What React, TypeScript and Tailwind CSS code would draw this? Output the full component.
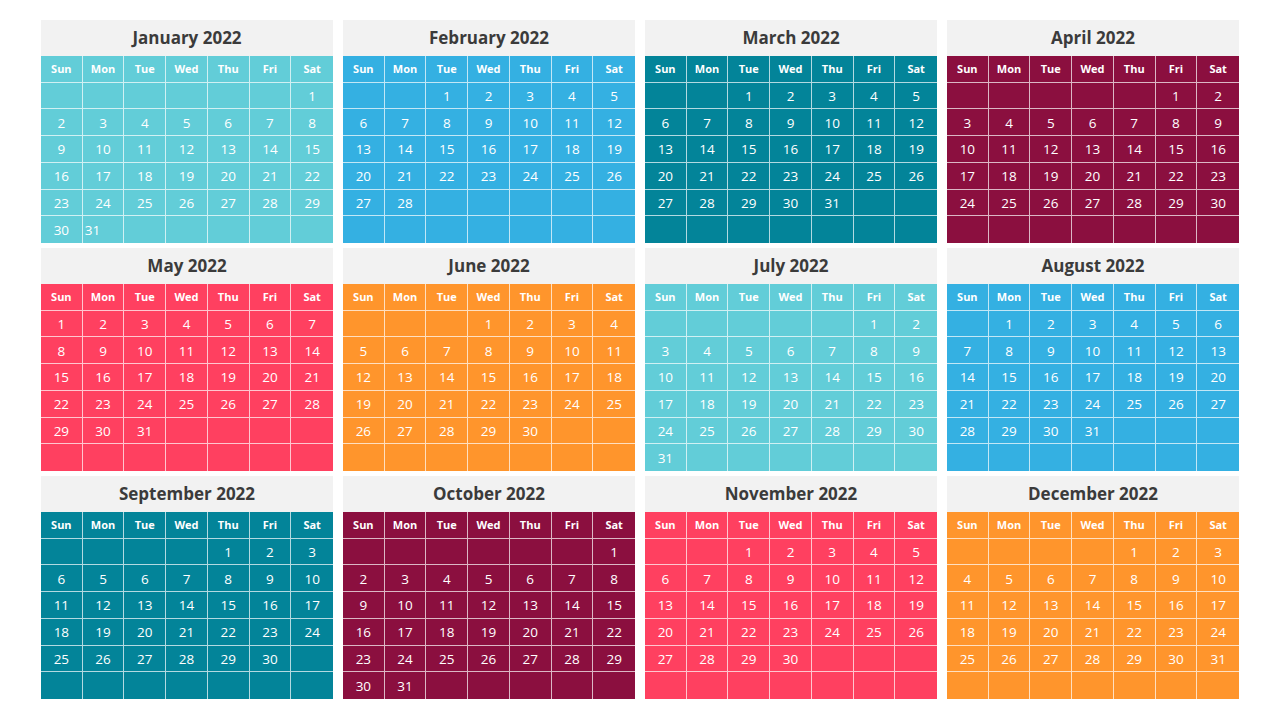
import React from "react";

const MONTHS = [
  "January", "February", "March", "April", "May", "June",
  "July", "August", "September", "October", "November", "December",
];
const COLORS = [
  "bg-[#62cdd8]", "bg-[#34b0e2]", "bg-[#038499]", "bg-[#8b0f3f]",
  "bg-[#ff4060]", "bg-[#ff952c]", "bg-[#62cdd8]", "bg-[#34b0e2]",
  "bg-[#038499]", "bg-[#8b0f3f]", "bg-[#ff4060]", "bg-[#ff952c]",
];
const DAYS = ["Sun", "Mon", "Tue", "Wed", "Thu", "Fri", "Sat"];

function Month({ m }: { m: number }) {
  const first = new Date(2022, m, 1).getDay();
  const count = new Date(2022, m + 1, 0).getDate();
  const cells: (number | null)[] = [];
  for (let i = 0; i < 42; i++) {
    const d = i - first + 1;
    cells.push(d >= 1 && d <= count ? d : null);
  }
  return (
    <div className="flex flex-col">
      <div className="h-[36px] bg-[#f2f2f2] flex items-center justify-center text-[17px] font-bold text-[#3b3b3b]">
        {MONTHS[m]} 2022
      </div>
      <div className={`grid grid-cols-7 grid-rows-[repeat(7,1fr)] h-[187px] ${COLORS[m]} text-white`}>
        {DAYS.map((d, i) => (
          <div
            key={d}
            className={`flex items-center justify-center text-[11px] font-bold border-b border-white/70 ${i < 6 ? "border-r" : ""}`}
          >
            {d}
          </div>
        ))}
        {cells.map((d, i) => {
          const col = i % 7;
          const row = Math.floor(i / 7);
          const odd = m === 0 && d === 31;
          const label = m === 8 && d === 4 ? 6 : d;
          return (
            <div
              key={i}
              className={`flex items-center pt-px ${odd ? "justify-start pl-[2px]" : "justify-center"} text-[13.5px] border-white/70 ${col < 6 ? "border-r" : ""} ${row < 5 ? "border-b" : ""}`}
            >
              {label ?? ""}
            </div>
          );
        })}
      </div>
    </div>
  );
}

export default function App() {
  return (
    <div
      className="w-[1280px] h-[720px] bg-white pt-[20px] pl-[41px]"
      style={{ fontFamily: '"Open Sans", "Noto Sans", sans-serif' }}
    >
      <div className="grid grid-cols-[repeat(4,292px)] gap-x-[10px] gap-y-[5px]">
        {MONTHS.map((_, m) => (
          <Month key={m} m={m} />
        ))}
      </div>
    </div>
  );
}
